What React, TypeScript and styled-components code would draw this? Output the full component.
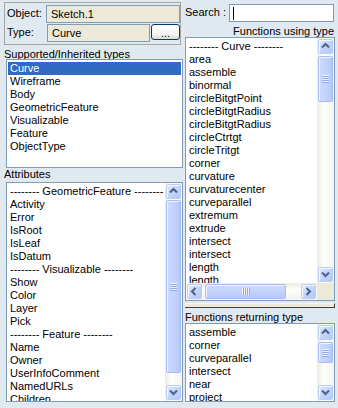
import React from "react";
import styled, { createGlobalStyle } from "styled-components";

const GlobalStyle = createGlobalStyle`
  html, body { margin: 0; padding: 0; background: #e0e8f0; }
  body { font-family: "Liberation Sans", Arial, sans-serif; font-size: 11px; color: #000; }
  * { box-sizing: border-box; }
`;

const Window = styled.div`
  width: 338px;
  height: 408px;
  background: #e0e8f0;
  display: grid;
  grid-template-columns: 179px 150px;
  column-gap: 2px;
  padding-left: 4px;
  overflow: hidden;
`;

const Column = styled.div<{ $pt: number }>`
  display: flex;
  flex-direction: column;
  padding-top: ${(p) => p.$pt}px;
  min-width: 0;
`;

const InfoFrame = styled.div`
  width: 177px;
  height: 43px;
  border: 1px solid #a5a5a8;
  padding-top: 2px;
  display: flex;
  flex-direction: column;
  gap: 1px;
`;

const FieldRow = styled.div`
  display: flex;
  align-items: flex-start;
  height: 18px;
`;

const FieldLabel = styled.div<{ $w: number }>`
  width: ${(p) => p.$w}px;
  flex: none;
  padding-left: 2px;
  line-height: 17px;
  white-space: nowrap;
`;

const ReadField = styled.div<{ $w: number }>`
  width: ${(p) => p.$w}px;
  height: 18px;
  flex: none;
  border: 1px solid #7f9db9;
  background: #ece9d8;
  padding-left: 4px;
  line-height: 17px;
  white-space: nowrap;
`;

const DotsButton = styled.button`
  margin-left: 1px;
  width: 29px;
  height: 16px;
  flex: none;
  border: 1px solid #003c74;
  border-radius: 3px;
  background: linear-gradient(#ffffff, #f4f3ee 70%, #dcd8cc);
  font: inherit;
  font-size: 11px;
  padding: 0;
  line-height: 16px;
  text-align: center;
  color: #000;
`;

const SectionLabel = styled.div<{ $h: number; $pt: number; $align?: string }>`
  height: ${(p) => p.$h}px;
  padding-top: ${(p) => p.$pt}px;
  padding-right: 1px;
  line-height: 13px;
  text-align: ${(p) => p.$align || "left"};
  white-space: nowrap;
  flex: none;
`;

const ListBox = styled.div<{ $h: number; $ml?: number; $hscroll?: boolean; $vscroll?: boolean }>`
  height: ${(p) => p.$h}px;
  margin-left: ${(p) => p.$ml || 0}px;
  border: 1px solid #7f9db9;
  background: #fff;
  display: grid;
  grid-template-columns: ${(p) => (p.$vscroll ? "1fr 17px" : "1fr")};
  grid-template-rows: ${(p) => (p.$hscroll ? "1fr 17px" : "1fr")};
  overflow: hidden;
  flex: none;
`;

const ItemsArea = styled.div`
  overflow: hidden;
  padding: 2px 1px 0 1px;
  min-width: 0;
`;

const Item = styled.div<{ $selected?: boolean }>`
  height: 13px;
  line-height: 13px;
  padding-left: 2px;
  white-space: nowrap;
  background: ${(p) => (p.$selected ? "#316ac5" : "transparent")};
  color: ${(p) => (p.$selected ? "#fff" : "#000")};
`;

const VTrack = styled.div`
  display: flex;
  flex-direction: column;
  background: linear-gradient(90deg, #eeede5, #fdfdfa 40%, #f4f3ee);
  min-height: 0;
`;

const HTrack = styled.div`
  display: flex;
  flex-direction: row;
  background: linear-gradient(180deg, #eeede5, #fdfdfa 40%, #f4f3ee);
  min-width: 0;
`;

const SBButton = styled.div`
  width: 17px;
  height: 17px;
  flex: none;
  padding: 1px;
  display: flex;
`;

const SBFace = styled.div`
  flex: 1;
  border-radius: 2px;
  border: 1px solid #bacdf7;
  background: linear-gradient(135deg, #e4ecfe 0%, #c6d6fc 45%, #b3c8f7 100%);
  display: flex;
  align-items: center;
  justify-content: center;
  box-shadow: inset 1px 1px 0 #f4f7ff;
`;

const VThumb = styled.div<{ $offset: number; $size: number }>`
  margin-top: ${(p) => p.$offset}px;
  height: ${(p) => p.$size}px;
  margin-left: 1px;
  margin-right: 1px;
  flex: none;
  border-radius: 2px;
  border: 1px solid #a6bdf2;
  background: linear-gradient(90deg, #cbdafd, #c1d2fb 60%, #b5c9f7);
  box-shadow: inset 1px 1px 0 #eef3ff;
  display: flex;
  align-items: center;
  justify-content: center;
`;

const HThumb = styled.div<{ $offset: number; $size: number }>`
  margin-left: ${(p) => p.$offset}px;
  width: ${(p) => p.$size}px;
  margin-top: 1px;
  margin-bottom: 1px;
  flex: none;
  border-radius: 2px;
  border: 1px solid #a6bdf2;
  background: linear-gradient(180deg, #cbdafd, #c1d2fb 60%, #b5c9f7);
  box-shadow: inset 1px 1px 0 #eef3ff;
  display: flex;
  align-items: center;
  justify-content: center;
`;

const VGrip = styled.div`
  width: 7px;
  height: 8px;
  background: repeating-linear-gradient(180deg, #eef3ff 0 1px, #8dabef 1px 2px);
`;

const HGrip = styled.div`
  width: 8px;
  height: 7px;
  background: repeating-linear-gradient(90deg, #eef3ff 0 1px, #8dabef 1px 2px);
`;

const Spacer = styled.div`
  flex: 1;
`;

const Corner = styled.div`
  background: #ece9d8;
`;

const SearchRow = styled.div`
  display: flex;
  align-items: flex-start;
  height: 18px;
  flex: none;
`;

const SearchLabel = styled.div`
  width: 44px;
  flex: none;
  line-height: 16px;
  white-space: nowrap;
`;

const SearchInput = styled.div`
  width: 105px;
  height: 18px;
  border: 1px solid #7f9db9;
  background: #fff;
  display: flex;
  align-items: center;
  padding-left: 3px;
`;

const Caret = styled.span`
  display: block;
  width: 1px;
  height: 13px;
  background: #000;
`;

const Splitter = styled.div`
  margin-top: 2px;
  height: 5px;
  flex: none;
  background: #ece9d8;
  border-top: 1px solid #f5f4ee;
  border-bottom: 1px solid #404040;
  border-right: 1px solid #404040;
`;

type Dir = "up" | "down" | "left" | "right";

const Arrow = ({ dir }: { dir: Dir }) => {
  const pts: Record<Dir, string> = {
    up: "1,5.5 4.5,2 8,5.5",
    down: "1,2.5 4.5,6 8,2.5",
    left: "5.5,1 2,4.5 5.5,8",
    right: "2.5,1 6,4.5 2.5,8",
  };
  return (
    <svg width="9" height="9" viewBox="0 0 9 9">
      <polyline points={pts[dir]} fill="none" stroke="#4d6185" strokeWidth="2" />
    </svg>
  );
};

const ScrollBtn = ({ dir }: { dir: Dir }) => (
  <SBButton>
    <SBFace>
      <Arrow dir={dir} />
    </SBFace>
  </SBButton>
);

const VScroll = ({ offset, size }: { offset: number; size: number }) => (
  <VTrack>
    <ScrollBtn dir="up" />
    <VThumb $offset={offset} $size={size}>
      <VGrip />
    </VThumb>
    <Spacer />
    <ScrollBtn dir="down" />
  </VTrack>
);

const HScroll = ({ offset, size }: { offset: number; size: number }) => (
  <HTrack>
    <ScrollBtn dir="left" />
    <HThumb $offset={offset} $size={size}>
      <HGrip />
    </HThumb>
    <Spacer />
    <ScrollBtn dir="right" />
  </HTrack>
);

const supported = ["Curve", "Wireframe", "Body", "GeometricFeature", "Visualizable", "Feature", "ObjectType"];

const attributes = [
  "-------- GeometricFeature --------",
  "Activity",
  "Error",
  "IsRoot",
  "IsLeaf",
  "IsDatum",
  "-------- Visualizable --------",
  "Show",
  "Color",
  "Layer",
  "Pick",
  "-------- Feature --------",
  "Name",
  "Owner",
  "UserInfoComment",
  "NamedURLs",
  "Children",
];

const functionsUsing = [
  "-------- Curve --------",
  "area",
  "assemble",
  "binormal",
  "circleBitgtPoint",
  "circleBitgtRadius",
  "circleBitgtRadius",
  "circleCtrtgt",
  "circleTritgt",
  "corner",
  "curvature",
  "curvaturecenter",
  "curveparallel",
  "extremum",
  "extrude",
  "intersect",
  "intersect",
  "length",
  "length",
];

const functionsReturning = ["assemble", "corner", "curveparallel", "intersect", "near", "project"];

export default function App() {
  return (
    <>
      <GlobalStyle />
      <Window>
        <Column $pt={2}>
          <InfoFrame>
            <FieldRow>
              <FieldLabel $w={41}>Object:</FieldLabel>
              <ReadField $w={134}>Sketch.1</ReadField>
            </FieldRow>
            <FieldRow>
              <FieldLabel $w={42}>Type:</FieldLabel>
              <ReadField $w={103}>Curve</ReadField>
              <DotsButton>...</DotsButton>
            </FieldRow>
          </InfoFrame>
          <SectionLabel $h={14} $pt={3}>Supported/Inherited types</SectionLabel>
          <ListBox $h={109} $ml={2}>
            <ItemsArea>
              {supported.map((s, i) => (
                <Item key={i} $selected={i === 0}>
                  {s}
                </Item>
              ))}
            </ItemsArea>
          </ListBox>
          <SectionLabel $h={14} $pt={0}>Attributes</SectionLabel>
          <ListBox $h={220} $ml={2} $vscroll>
            <ItemsArea>
              {attributes.map((s, i) => (
                <Item key={i}>{s}</Item>
              ))}
            </ItemsArea>
            <VScroll offset={0} size={173} />
          </ListBox>
        </Column>
        <Column $pt={4}>
          <SearchRow>
            <SearchLabel>Search :</SearchLabel>
            <SearchInput>
              <Caret />
            </SearchInput>
          </SearchRow>
          <SectionLabel $h={15} $pt={3} $align="right">
            Functions using type
          </SectionLabel>
          <ListBox $h={264} $vscroll $hscroll>
            <ItemsArea>
              {functionsUsing.map((s, i) => (
                <Item key={i}>{s}</Item>
              ))}
            </ItemsArea>
            <VScroll offset={1} size={46} />
            <HScroll offset={2} size={81} />
            <Corner />
          </ListBox>
          <Splitter />
          <SectionLabel $h={15} $pt={3}>Functions returning type</SectionLabel>
          <ListBox $h={79} $vscroll>
            <ItemsArea>
              {functionsReturning.map((s, i) => (
                <Item key={i}>{s}</Item>
              ))}
            </ItemsArea>
            <VScroll offset={1} size={21} />
          </ListBox>
        </Column>
      </Window>
    </>
  );
}
